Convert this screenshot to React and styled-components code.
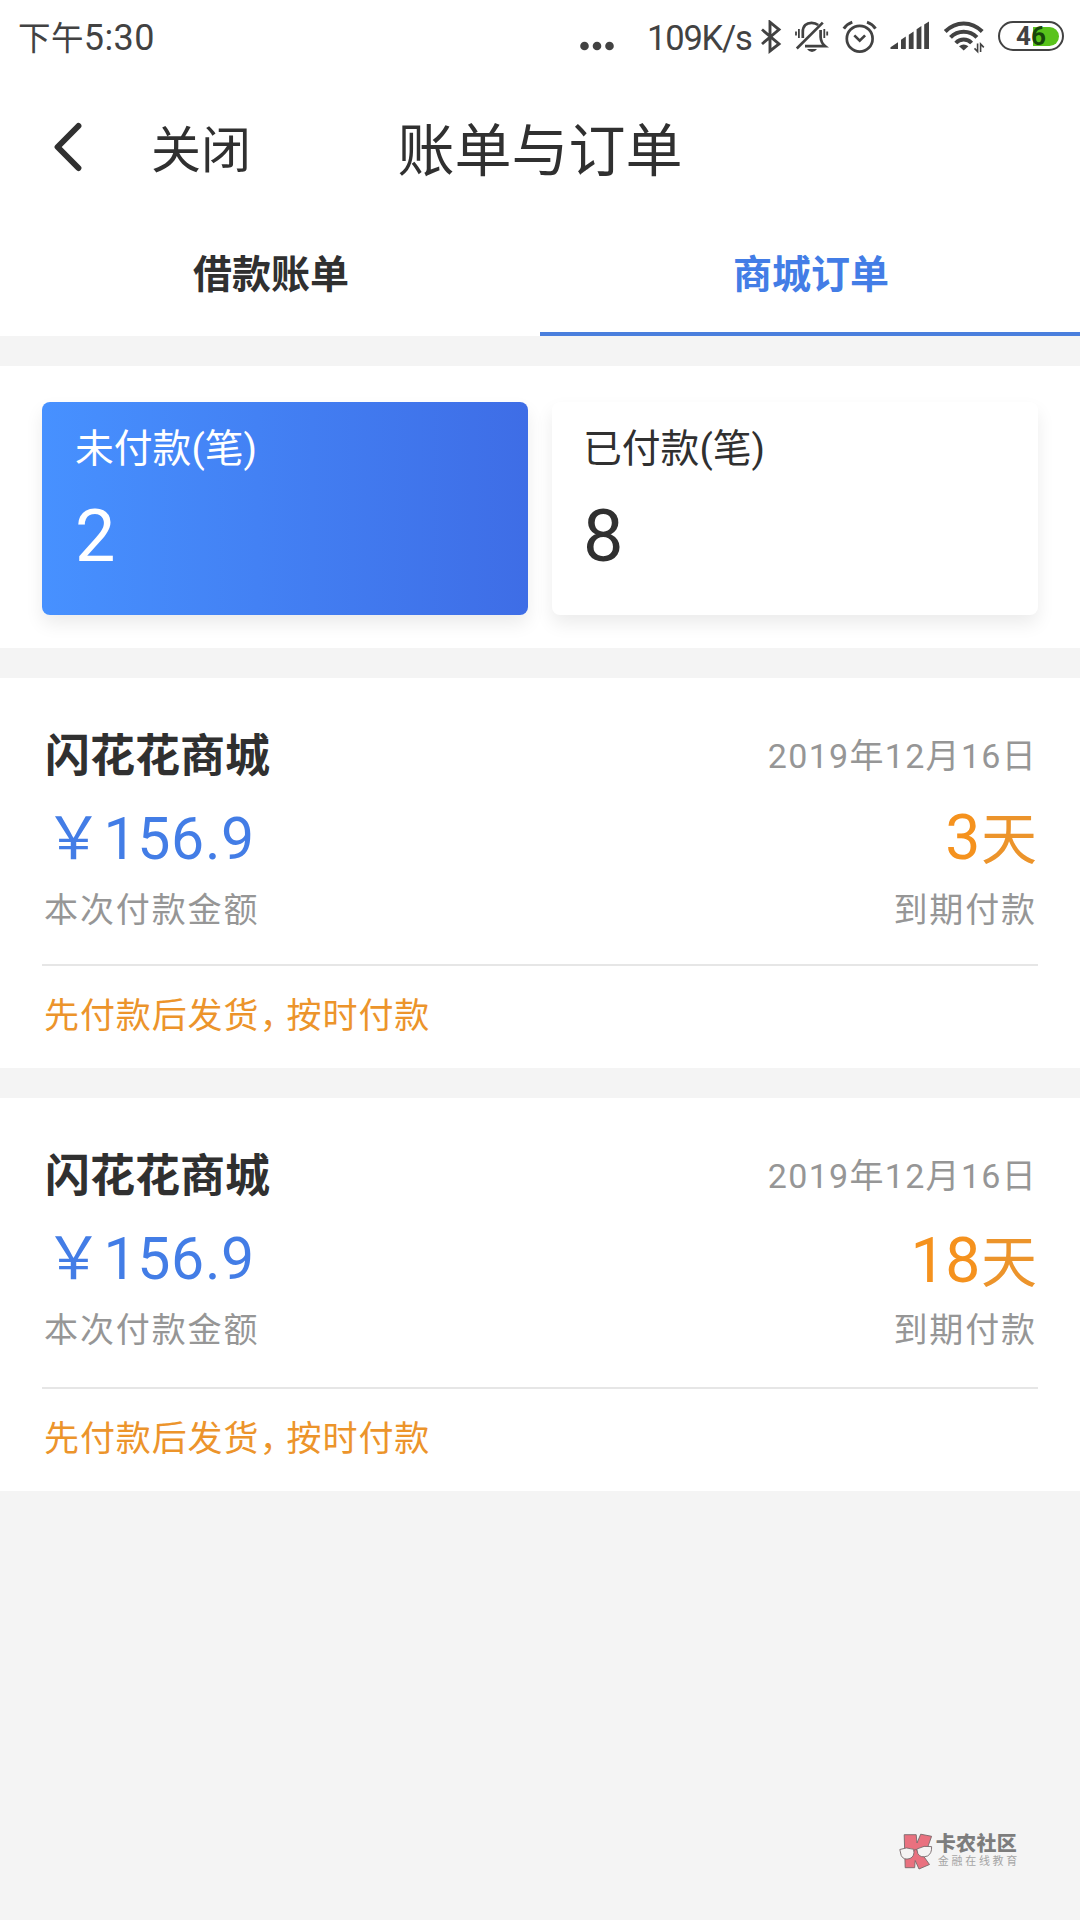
import React from "react";
import styled, { createGlobalStyle } from "styled-components";

const Global = createGlobalStyle`
  * { box-sizing: border-box; }
  body { margin: 0; background: #f4f4f4; color: #303030;
    font-family: Roboto, "Noto Sans CJK SC", sans-serif; }
`;
const Page = styled.main`
  width: 1080px; min-height: 1920px; display: flex; flex-direction: column; background: #f4f4f4;
`;

/* status bar */
const StatusBar = styled.header`
  height: 80px; padding: 0 16px 6px 18px; display: flex; align-items: center; justify-content: space-between;
  background: #fff; color: #424242;
`;
const Clock = styled.span`font-size: 32.5px; line-height: 74px; padding-top: 2px; letter-spacing: 0.4px;`;
const ClockDigits = styled.span`font-size: 36px;`;
const StatusIcons = styled.div`display: flex; align-items: center; height: 74px;`;
const Speed = styled.span`font-size: 34.5px; line-height: 74px; padding-top: 1px; letter-spacing: -1.2px; margin-left: 33px; width: 113px;`;
const Icon = styled.svg`
  display: block; flex: none;
  margin-left: ${(p) => p.$gap || 0}px;
  margin-top: ${(p) => p.$top || 0}px;
`;
const Battery = styled.div`
  position: relative; margin: -2px 0 0 13px; width: 66px; height: 30px; border: 2.6px solid #424242; border-radius: 15px;
  display: flex; align-items: center; justify-content: flex-end; padding-right: 3px;
`;
const Charge = styled.div`width: 26px; height: 19px; background: #59c31b; border-radius: 0 10px 10px 0;`;
const Level = styled.span`
  position: absolute; left: 16px; top: 0; font-size: 26px; font-weight: 700; line-height: 26px; color: #424242;
`;
const LevelOver = styled.span`color: #17460c;`;

/* navigation */
const NavBar = styled.nav`
  height: 136px; background: #fff; display: grid; grid-template-columns: 1fr auto 1fr; align-items: center;
  padding: 0 53px;
`;
const NavLeft = styled.div`display: flex; align-items: center; gap: 68px;`;
const CloseText = styled.span`font-size: 50px; line-height: 70px; padding-top: 6px;`;
const Title = styled.h1`margin: 0; padding-top: 8px; font-size: 57px; font-weight: 400; line-height: 80px;`;

const Tabs = styled.div`height: 120px; display: flex; background: #fff;`;
const Tab = styled.div`
  flex: 1; text-align: center; font-size: 39px; font-weight: 600; line-height: 118px; padding-left: 2px;
  color: ${(p) => (p.$active ? "#437de6" : "#303030")};
  border-bottom: 4px solid ${(p) => (p.$active ? "#4a7fdd" : "#fff")};
`;

/* summary cards */
const Summary = styled.section`
  margin-top: 30px; height: 282px; padding: 36px 42px 33px; background: #fff;
  display: grid; grid-template-columns: 1fr 1fr; gap: 24px;
`;
const Stat = styled.div`
  border-radius: 8px; padding: 22px 20px 0 ${(p) => (p.$active ? 33 : 31)}px;
  color: ${(p) => (p.$active ? "#fff" : "#303030")};
  background: ${(p) => (p.$active ? "linear-gradient(90deg, #4791ff, #3e6de6)" : "#fff")};
  box-shadow: 0 9px 18px rgba(0, 0, 0, 0.08);
`;
const StatLabel = styled.div`font-size: 38.8px; line-height: 50px;`;
const StatValue = styled.div`font-size: 72px; line-height: 84px; margin-top: 21px;`;

/* orders */
const Order = styled.article`
  margin-top: 30px; padding: 0 42px; background: #fff; height: ${(p) => p.$height}px;
  display: flex; flex-direction: column;
`;
const Row = styled.div`
  flex: none; display: flex; justify-content: space-between; align-items: flex-start;
  height: ${(p) => p.$height}px; padding: 0 1px 0 2px;
`;
const Shop = styled.h2`margin: 0 0 0 1px; padding-top: 49px; font-size: 45px; font-weight: 600; line-height: 60px;`;
const DateText = styled.span`padding-top: 46px; font-size: 34px; line-height: 64px; letter-spacing: 1.3px; color: #969696;`;
const Amount = styled.span`font-size: 59px; line-height: 80px; letter-spacing: 0.6px; color: #437de6; padding-top: 1px;`;
const Days = styled.span`
  display: flex; align-items: baseline; line-height: 80px; font-size: 62.5px; color: #f5921e;
  letter-spacing: -0.4px; padding-top: ${(p) => p.$drop}px;
`;
const DayUnit = styled.span`font-size: 56px; letter-spacing: 0; padding-left: 1px; color: #ec942b;`;
const Caption = styled.span`font-size: 34px; line-height: 50px; letter-spacing: 1.9px; color: #969696;`;
const Divider = styled.hr`
  flex: none; width: 100%; height: 2px; border: 0; margin: ${(p) => p.$gap}px 0 0; background: #e6e6e6;
`;
const Note = styled.p`
  flex: none; margin: 0; padding: 0 2px; font-size: 35px; line-height: 102px; letter-spacing: 0.9px; color: #ec942b;
`;
const Comma = styled.span`font-feature-settings: "halt" 1; padding-right: 8.8px;`;

/* community mark */
const Brand = styled.footer`margin: auto 60px 50px auto; display: flex; align-items: center; gap: 3px;`;
const BrandText = styled.div`display: flex; flex-direction: column;`;
const BrandName = styled.span`font-size: 20px; font-weight: 900; line-height: 21px; letter-spacing: 0.3px; color: #7d7d7d;`;
const BrandSub = styled.span`font-size: 11px; line-height: 14px; letter-spacing: 2.7px; color: #a5a5a5; padding-left: 2px;`;

const INK = "#424242";

const DotsIcon = () => (
  <Icon $top={17} width="34" height="10" viewBox="0 0 34 10" fill={INK}>
    <circle cx="4.5" cy="5" r="4.3" /><circle cx="17" cy="5" r="4.3" /><circle cx="29.5" cy="5" r="4.3" />
  </Icon>
);
const BluetoothIcon = () => (
  <Icon width="22" height="34" viewBox="0 0 22 34" fill="none" stroke={INK} strokeWidth="2.9">
    <path d="M2 9.5 19 24 10 31V2.2L19 9.5 2 24" />
  </Icon>
);
const MutedBellIcon = () => (
  <Icon $gap={12} width="36" height="34" viewBox="0 0 36 34" fill="none" stroke={INK} strokeWidth="2.7">
    <path d="M8.8 18V12C8.8 5.5 12.5 2.8 17.5 2.8 20.3 2.8 22.5 3.6 24.2 5M26.6 10V17C26.8 21 28.5 24 31.2 26.2H11" />
    <path d="M2.8 28.5 28.8 2.6" />
    <path d="M2 11.5V15.5M4.9 9V18M30.3 9V18M33.2 11.5V15.5" strokeWidth="1.8" />
    <path d="M13 29H23Q21 32 18 32T13 29Z" fill={INK} stroke="none" />
  </Icon>
);
const AlarmIcon = () => (
  <Icon $gap={12} width="36" height="34" viewBox="0 0 36 34" fill="none" stroke={INK} strokeWidth="2.7">
    <circle cx="17.7" cy="18.7" r="12.9" />
    <path d="M12.3 15.4 17.7 20.6 23.1 15.4" />
    <path d="M1.8 8.6Q5 4 10.3 2.2M25 2.2Q30.3 4 33.5 8.6" strokeWidth="3" />
  </Icon>
);
const SignalIcon = () => (
  <Icon $gap={11} width="41" height="34" viewBox="0 0 41 34" fill={INK}>
    <path d="M1.5 29V27.3L9 22.3V29ZM12 29V19.7L16.8 16.5V29ZM19.8 29V14.7L24.6 11.4V29ZM27.6 29V9.2L32.4 6V29ZM35.2 29V4.6L40 1.4V29Z" />
  </Icon>
);
const WifiIcon = () => (
  <Icon $gap={13} width="42" height="34" viewBox="0 0 42 34" fill="none" stroke={INK} strokeWidth="4">
    <path d="M2.2 11.5Q10.2 3.4 20.7 3.4T39.2 11.5M7.5 17.4Q13 11.8 20.7 11.8T33.9 17.4M12.8 23Q16 19.6 20.7 19.6T28.6 23" />
    <path d="M16 26.3Q20.7 22.8 25.4 26.3L20.7 30.6Z" fill={INK} stroke="none" />
    <path d="M34.6 23.5V31.5L31.5 28.4M37.6 32V24L40.8 27.4" strokeWidth="1.6" />
  </Icon>
);
const BackIcon = () => (
  <Icon $top={-2} width="30" height="50" viewBox="0 0 30 50" fill="none" stroke="#303030" strokeWidth="6" strokeLinecap="round" strokeLinejoin="round">
    <path d="M25.4 4 4.6 25 25.4 46" />
  </Icon>
);
const KLogo = () => (
  <Icon $top={1} width="34" height="37" viewBox="0 0 34 37" stroke="#77696b" strokeWidth="0.9" strokeLinejoin="round">
    <path d="M5.2 1.7H17.2L18 10 21.7 1.2 32.6 3.3 27.5 17.5 22 19.5 30.5 31.5 20 36 16.2 27.5 15.7 34.7H6.2Z" fill="#e9717f" />
    <path d="M.8 16.5Q7 13.5 14.7 16.3 16 23.5 11 25.5 4.5 27.5 2.2 22.5ZM17.8 16Q25 12 32.6 13.6 33 20.5 28.5 23 21.5 25.5 18.8 20.5Z" fill="#f5f3f3" />
    <path d="M14.7 17.5Q16.2 15.8 18 17" fill="none" />
  </Icon>
);

const orders = [
  { id: 1, days: 3, height: 390, gap: 29, drop: 0 },
  { id: 2, days: 18, height: 393, gap: 32, drop: 3 },
];

function OrderCard({ order }) {
  return (
    <Order $height={order.height}>
      <Row $height={120}><Shop>闪花花商城</Shop><DateText>2019年12月16日</DateText></Row>
      <Row $height={87}>
        <Amount>￥156.9</Amount>
        <Days $drop={order.drop}>{order.days}<DayUnit>天</DayUnit></Days>
      </Row>
      <Row $height={50}><Caption>本次付款金额</Caption><Caption>到期付款</Caption></Row>
      <Divider $gap={order.gap} />
      <Note>先付款后发货<Comma>，</Comma>按时付款</Note>
    </Order>
  );
}

export default function App() {
  return (
    <Page>
      <Global />
      <StatusBar>
        <Clock>下午<ClockDigits>5:30</ClockDigits></Clock>
        <StatusIcons>
          <DotsIcon />
          <Speed>109K/s</Speed>
          <BluetoothIcon />
          <MutedBellIcon />
          <AlarmIcon />
          <SignalIcon />
          <WifiIcon />
          <Battery><Charge /><Level>4<LevelOver>6</LevelOver></Level></Battery>
        </StatusIcons>
      </StatusBar>
      <NavBar>
        <NavLeft><BackIcon /><CloseText>关闭</CloseText></NavLeft>
        <Title>账单与订单</Title>
      </NavBar>
      <Tabs><Tab>借款账单</Tab><Tab $active>商城订单</Tab></Tabs>
      <Summary>
        <Stat $active><StatLabel>未付款(笔)</StatLabel><StatValue>2</StatValue></Stat>
        <Stat><StatLabel>已付款(笔)</StatLabel><StatValue>8</StatValue></Stat>
      </Summary>
      {orders.map((order) => <OrderCard key={order.id} order={order} />)}
      <Brand>
        <KLogo />
        <BrandText><BrandName>卡农社区</BrandName><BrandSub>金融在线教育</BrandSub></BrandText>
      </Brand>
    </Page>
  );
}
